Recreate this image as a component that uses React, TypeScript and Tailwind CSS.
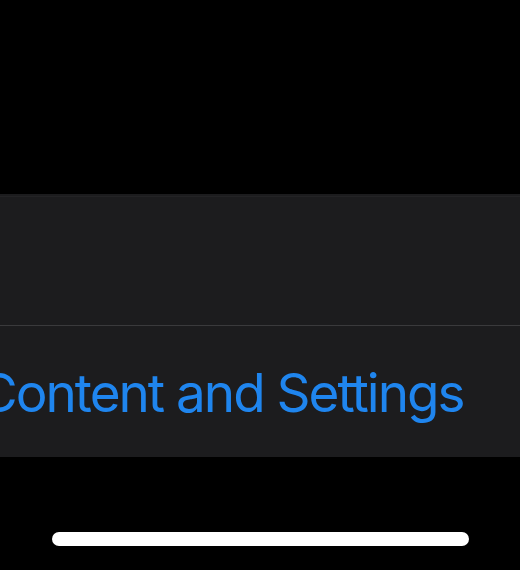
import React from 'react';

const App: React.FC = () => {
  return (
    <div className="w-[520px] h-[570px] bg-black flex flex-col overflow-hidden font-['Inter','Noto_Sans',sans-serif]">
      <div className="h-[194px] shrink-0" />

      <div className="bg-[#1c1c1e] flex flex-col">
        <div className="h-[3px] border-b border-[#232325]" />
        <div className="h-[129px] border-b border-[#3a3a3c]" />
        <div className="h-[131px] flex items-center pt-[3px]">
          <span className="ml-[-21px] whitespace-nowrap text-[53px] leading-none text-[#1f85ee] tracking-[-2px]">
            Content and Settings
          </span>
        </div>
      </div>

      <div className="flex-1 flex justify-center items-end pb-[24px]">
        <div className="w-[417px] h-[14px] rounded-full bg-white ml-[1px]" />
      </div>
    </div>
  );
};

export default App;
